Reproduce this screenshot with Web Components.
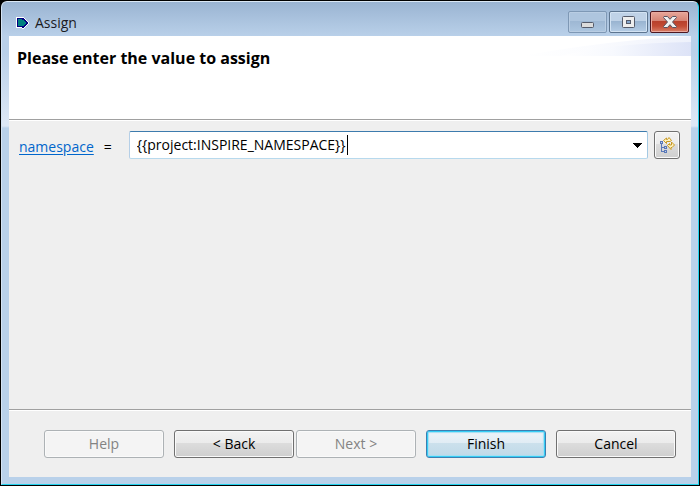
<!DOCTYPE html>
<html lang="en">
<head>
<meta charset="utf-8">
<title>Assign</title>
<style>
html, body { height: 100%; margin: 0; }
body { background: #000; font: 14px/20px "Open Sans", "Noto Sans", sans-serif; color: #000; }
</style>
</head>
<body>
<assign-dialog></assign-dialog>
<script>
const define = (name, html, setup) => customElements.define(name, class extends HTMLElement {
  constructor() {
    super();
    this.attachShadow({ mode: 'open' }).innerHTML = html;
  }
  connectedCallback() { if (setup) setup(this, this.shadowRoot); }
});

define('caption-button', `
<style>
:host { display: block; width: 39px; height: 22px; }
button { box-sizing: border-box; width: 100%; height: 100%; padding: 0; display: grid; place-items: center;
  border: 1px solid #5d7590; border-radius: 2px; box-shadow: inset 0 0 0 1px #d3e3f3;
  background: linear-gradient(#bfd2e7 0 45%, #98b3d0 45%, #b5cde6); }
:host([kind="min"]) button { border-color: #7e98b5; box-shadow: inset 0 0 0 1px #b9cde3;
  background: linear-gradient(#aec5de 0 45%, #9db7d3 45%, #adc6e0); }
:host([kind="close"]) button { border-color: #4d1720; box-shadow: inset 0 0 0 1px #eaa99e;
  background: linear-gradient(#e7a79b, #d68373 45%, #b8402c 46%, #c24b34 70%, #d98069); }
</style>
<button><slot></slot></button>`, (host, root) => {
  root.querySelector('button').setAttribute('aria-label', host.getAttribute('label'));
});

define('title-bar', `
<style>
:host { display: flex; align-items: center; box-sizing: border-box; height: 34px; padding: 0 2px 0 7px; }
h1 { flex: 1; margin: 0; padding: 8px 0 0 6px; font-size: 14px; line-height: 20px; font-weight: 400; color: #1b1b22; }
.mark { padding-top: 8px; display: block; }
nav { display: flex; gap: 2px; padding-top: 6px; }
</style>
<svg class="mark" width="13" height="12" viewBox="0 0 13 12" shape-rendering="crispEdges" aria-hidden="true">
  <path d="M0 0H8V1H9V2H10V3H11V4H12V5H13V7H12V8H11V9H10V10H9V11H8V12H6V11H0Z" fill="#fff"/>
  <path d="M1 1H8V2H9V3H10V4H11V5H12V7H11V8H10V9H9V10H8V11H6V10H1Z" fill="#000080"/>
  <path d="M2 2H6V3H8V4H9V5H10V7H9V8H8V9H2Z" fill="#008080"/>
</svg>
<h1><slot></slot></h1>
<nav>
  <caption-button kind="min" label="Minimize"><svg style="display:block" width="14" height="14"><rect x=".5" y="7.5" width="12" height="5" rx="1" fill="#dcdcdc" stroke="#555b6a"/></svg></caption-button>
  <caption-button kind="max" label="Maximize"><svg style="display:block" width="13" height="12"><rect x=".5" y=".5" width="12" height="11" rx="1" fill="#eee" stroke="#555b6a"/><rect x="4.500" y="4.500" width="4" height="3" fill="#86a6cb" stroke="#555b6a"/></svg></caption-button>
  <caption-button kind="close" label="Close"><svg style="display:block" width="14" height="12" viewBox="0 0 14 12"><path d="M1 .5H4.500L7 3.300L9.500 .5H13L13.500 1.500L9.500 6L13.500 10.500L13 11.500H9.500L7 8.700L4.500 11.500H1L.5 10.500L4.500 6L.5 1.500Z" fill="#f1f1f1" stroke="#565563" stroke-linejoin="round"/></svg></caption-button>
</nav>`);

define('wizard-header', `
<style>
:host { display: grid; grid-template-columns: 1fr; box-sizing: border-box; height: 85px; background: #fff; border-bottom: 1px solid #fff; box-shadow: inset 0 -1px #a0a0a0; }
h2, svg { grid-area: 1 / 1; }
h2 { margin: 0; padding: 12px 8px; font-size: 16px; line-height: 20px; font-weight: 700; }
svg { justify-self: end; display: block; }
</style>
<svg width="170" height="20" viewBox="0 0 170 20" aria-hidden="true">
  <defs><linearGradient id="g"><stop stop-color="#fff"/><stop offset=".4" stop-color="#f7f9fe"/><stop offset="1" stop-color="#dde3f7"/></linearGradient></defs>
  <path d="M0 20Q90 4 170 0V20Z" fill="url(#g)" opacity=".5"/><path d="M40 20Q90 7 170 6V20Z" fill="url(#g)"/>
</svg>
<h2><slot></slot></h2>`);

define('combo-box', `
<style>
:host { display: flex; align-items: center; flex: 1; min-width: 0; box-sizing: border-box; height: 28px; padding: 0 5px 0 7px;
  background: #fff; border: 1px solid #b5cfe7; border-top-color: #3d7bad; border-right-color: #a4c9e3; border-bottom-color: #b7d9ed; border-radius: 2px; }
input { field-sizing: content; min-width: 8px; max-width: 90%; border: 0; padding: 0; margin: 0; outline: 0; background: none; color: #000; font: inherit; height: 20px; }
.caret { width: 1px; height: 20px; margin-left: 1px; background: #000; }
button { margin-left: auto; padding: 0; width: 9px; height: 20px; border: 0; background: none; display: grid; place-items: center; }
</style>
<input type="text" role="combobox" aria-label="namespace" aria-expanded="false" spellcheck="false"><span class="caret"></span>
<button aria-label="Show values"><svg width="9" height="5" shape-rendering="crispEdges"><path d="M0 0H9L4.500 5Z"/></svg></button>`,
(host, root) => { root.querySelector('input').value = host.getAttribute('value'); });

define('push-button', `
<style>
:host { display: block; width: 120px; height: 28px; }
:host([icon]) { width: 26px; }
button { box-sizing: border-box; width: 100%; height: 100%; margin: 0; padding: 0; font: inherit; color: #000;
  display: grid; place-items: center; border: 1px solid #707070; border-radius: 3px; box-shadow: inset 0 0 0 1px #fafafa;
  background: linear-gradient(#f2f2f2, #ebebeb 47%, #dcdcdc 48%, #cfcfcf); }
:host([primary]) button { border-color: #3c7fb1; box-shadow: inset 0 0 0 1px #35cdf5, inset 0 0 1px 2px #a5def2;
  background: linear-gradient(#eef4f9, #e0ecf4 47%, #cbe0ec 48%, #bfd9e8); }
:host([disabled]) button { color: #838383; border-color: #adb2b5; background: #f4f4f4; }
</style>
<button><slot></slot></button>`, (host, root) => {
  const button = root.querySelector('button');
  button.disabled = host.hasAttribute('disabled');
  if (host.hasAttribute('label')) button.setAttribute('aria-label', host.getAttribute('label'));
});

define('value-row', `
<style>
:host { display: flex; align-items: center; padding: 10px 11px 0 10px; }
a, .eq { padding-top: 3px; }
a { color: #0066cc; text-underline-offset: 2px; }
.eq { flex: none; width: 25px; padding-left: 10px; }
push-button { margin-left: 6px; }
svg { display: block; }
</style>
<a href="#namespace">namespace</a><span class="eq">=</span>
<combo-box value="{{project:INSPIRE_NAMESPACE}}"></combo-box>
<push-button icon label="Choose value">
  <svg width="16" height="18" viewBox="0 0 16 18" shape-rendering="crispEdges">
    <path d="M2 7H3V16H2ZM3 11H6V12H3ZM3 15H6V16H3Z" fill="#5a78b8"/>
    <path d="M1 5H4V8H1ZM5 10H8V13H5ZM5 14H8V17H5Z" fill="#5a78b8"/>
    <path d="M2 6H3V7H2ZM6 11H7V12H6ZM6 15H7V16H6Z" fill="#c3d3ee"/>
    <g fill="#fff3bf" stroke="#c99a25" shape-rendering="auto" stroke-linejoin="round">
      <path d="M4.500 4.500L7.500 2V3.500H8.500L10 1.500L12.500 4.500L11 5.500H7.500V7.500Z"/>
      <path d="M8.500 9.500L10.500 7.500V9H12.500V6L15.500 9L13 11.500H12V13.500Z"/>
    </g>
  </svg>
</push-button>`);

define('wizard-footer', `
<style>
:host { display: flex; justify-content: flex-end; gap: 10px; padding: 20px 15px 19px; border-top: 1px solid #a0a0a0; box-shadow: inset 0 1px #fff; }
.pair { display: flex; gap: 2px; }
</style>
<push-button disabled>Help</push-button>
<div class="pair"><push-button>&lt; Back</push-button><push-button disabled>Next &gt;</push-button></div>
<push-button primary>Finish</push-button>
<push-button>Cancel</push-button>`);

define('assign-dialog', `
<style>
:host { display: flex; flex-direction: column; box-sizing: border-box; height: calc(100vh - 2px); margin: 1px; padding: 0 7px 7px;
  border: 1px solid #22d3ee; border-top-color: #dbe8f5; border-left-color: #d5e4f4; border-radius: 6px 6px 0 0;
  background: linear-gradient(#9ab4d2, #b9d0e9 34px, #b9d0e9 50px, #dce7f5 120px, #dce7f5 124px, #b9d1ea 126px); }
main { flex: 1; display: flex; flex-direction: column; background: #efefef; min-height: 0; }
section { flex: 1; }
</style>
<title-bar>Assign</title-bar>
<main>
  <wizard-header>Please enter the value to assign</wizard-header>
  <section><value-row></value-row></section>
  <wizard-footer></wizard-footer>
</main>`);
</script>
</body>
</html>
